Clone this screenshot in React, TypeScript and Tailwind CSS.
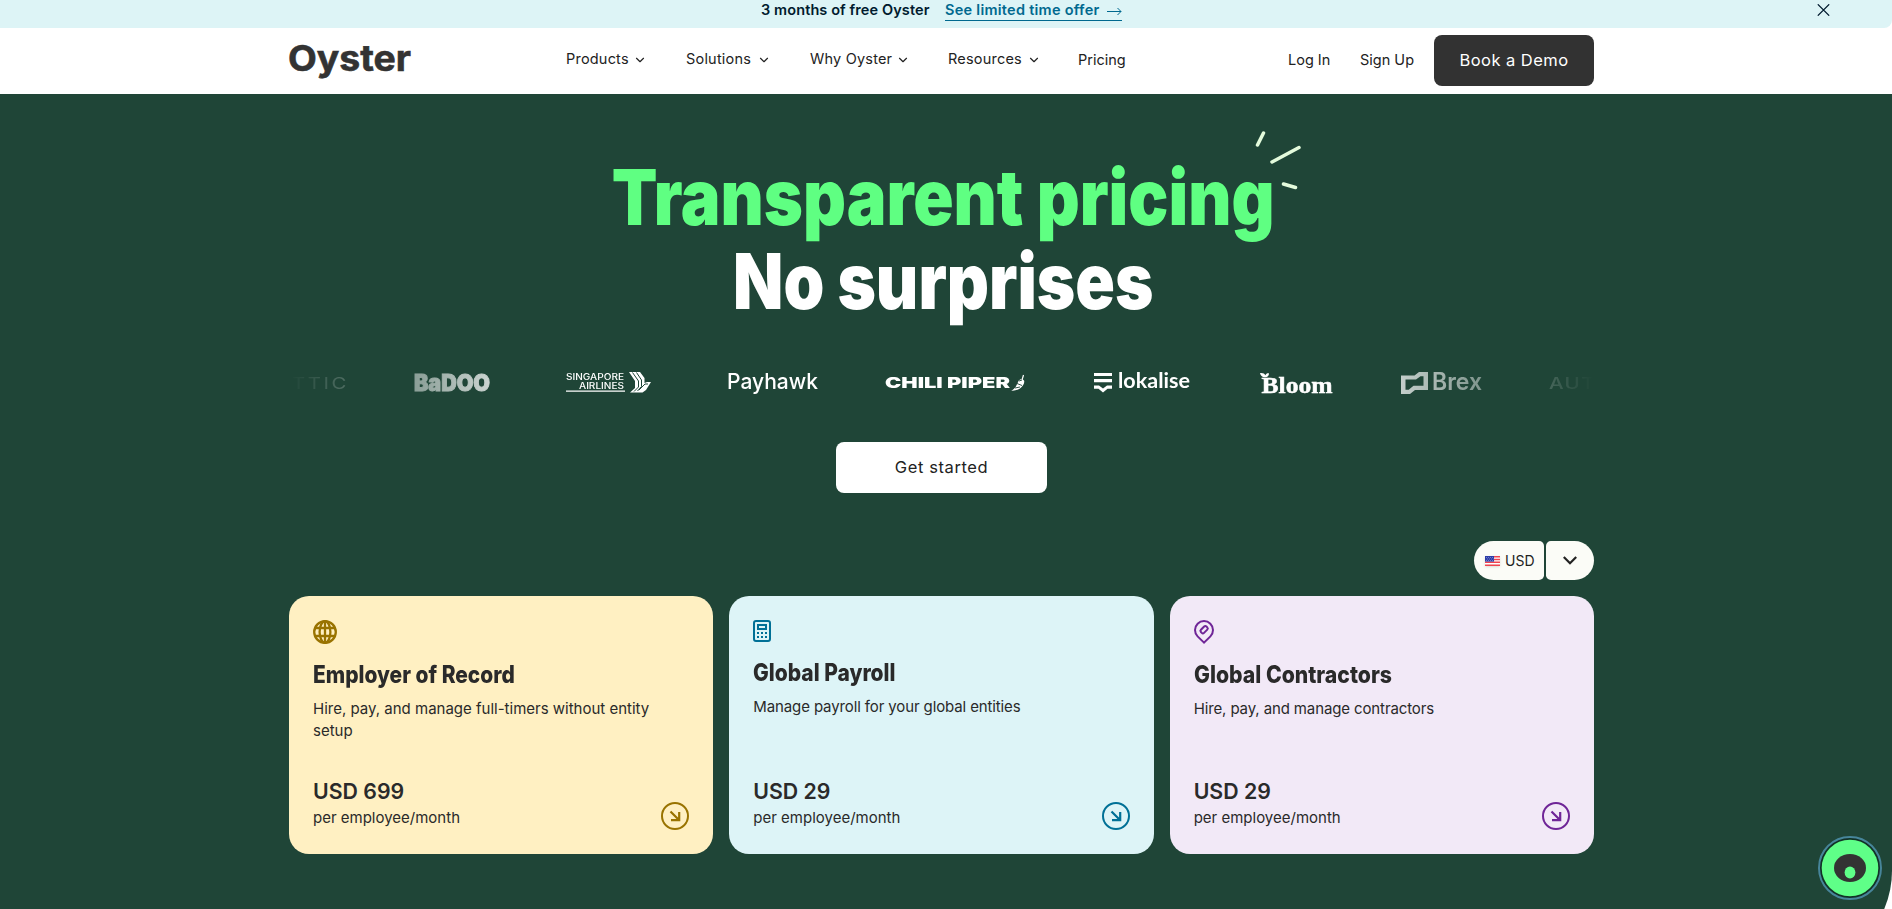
import type { ReactNode } from "react";
import { ChevronDown } from "lucide-react";

type Plan = {
  title: string;
  description: string;
  price: string;
  card: string;
  accent: string;
  titleClass: string;
  descriptionClass: string;
  icon: ReactNode;
};

const NAV = [
  { label: "Products", cell: "w-[120px]", text: "w-[67px]" },
  { label: "Solutions", cell: "w-[124px]", text: "w-[71px]" },
  { label: "Why Oyster", cell: "w-[138px]", text: "w-[86px]" },
  { label: "Resources", cell: "w-[130px]", text: "w-[79px]" },
];

function GlobeIcon() {
  return (
    <svg width="24" height="24" viewBox="0 0 24 24" fill="none" stroke="currentColor" strokeWidth="2.3">
      <circle cx="12" cy="12" r="10.8" />
      <ellipse cx="12" cy="12" rx="5.4" ry="10.8" />
      <path d="M12 1v22M2 8h20M2 16h20" />
    </svg>
  );
}

function CalculatorIcon() {
  return (
    <svg width="18" height="22" viewBox="0 0 18 22" fill="none" stroke="currentColor" strokeWidth="2">
      <rect x="1" y="1" width="16" height="20" rx="2" />
      <path d="M5 5h8v4H5z" />
      <path d="M4 13h2M8 13h2M12 13h2M4 17h2M8 17h2M12 17h2" />
    </svg>
  );
}

function PinIcon() {
  return (
    <svg width="20" height="24" viewBox="0 0 20 24" fill="none" stroke="currentColor" strokeWidth="2">
      <path d="M10 22.6 3.6 16.4a9 9 0 1 1 12.8 0z" />
      <rect x="7.9" y="5.8" width="4.4" height="7.8" rx="1.6" transform="rotate(45 10.1 9.7)" />
    </svg>
  );
}

const PLANS: Plan[] = [
  {
    title: "Employer of Record",
    description: "Hire, pay, and manage full-timers without entity setup",
    price: "USD 699",
    card: "bg-[#fff0c2]",
    accent: "text-[#997300]",
    titleClass: "scale-x-[0.872]",
    descriptionClass: "",
    icon: <GlobeIcon />,
  },
  {
    title: "Global Payroll",
    description: "Manage payroll for your global entities",
    price: "USD 29",
    card: "bg-[#ddf4f7]",
    accent: "text-[#007096]",
    titleClass: "scale-x-[0.874]",
    descriptionClass: "tracking-[-0.12px]",
    icon: <CalculatorIcon />,
  },
  {
    title: "Global Contractors",
    description: "Hire, pay, and manage contractors",
    price: "USD 29",
    card: "bg-[#f2e9f7]",
    accent: "text-[#6f2597]",
    titleClass: "scale-x-[0.883]",
    descriptionClass: "tracking-[-0.12px]",
    icon: <PinIcon />,
  },
];

function Banner() {
  return (
    <div className="flex h-7 rounded-br-lg bg-[#ddf4f6] text-[14.5px] leading-[20px] font-semibold text-[#001b2e]">
      <span className="ml-[761px] w-[184px] tracking-[0.1px] whitespace-nowrap">3 months of free Oyster</span>
      <a href="#" className="flex h-[21px] w-[177px] items-start justify-between border-b border-[#00698f] tracking-[0.27px] whitespace-nowrap text-[#00698f]">
        See limited time offer
        <svg className="mt-[6px]" width="15" height="10" viewBox="0 0 15 10" fill="none" stroke="currentColor">
          <path d="M0 5.5h14M10.5 2 14 5.5 10.5 9" />
        </svg>
      </a>
      <button type="button" aria-label="Close" className="mr-[62px] ml-auto flex h-5 items-center">
        <svg width="13" height="12" viewBox="0 0 13 12" stroke="currentColor" strokeWidth="1.2">
          <path d="M.8.3 12.2 11.7M12.2.3.8 11.7" />
        </svg>
      </button>
    </div>
  );
}

function Header() {
  return (
    <header className="flex h-[66px] items-center bg-white pb-px pl-[289px] text-[14.5px] text-[#222]">
      <svg width="124" height="40" viewBox="0 0 124 40" className="shrink-0 overflow-visible">
        <text x="-1" y="29.5" textLength="123" lengthAdjust="spacingAndGlyphs" fontFamily="Inter, sans-serif" fontSize="36" fontWeight="700" fill="#333" stroke="#333" strokeWidth=".6">
          Oyster
        </text>
      </svg>
      <nav className="ml-[153px] flex items-center pb-0.5">
        {NAV.map((item) => (
          <a key={item.label} href="#" className={`flex items-center pb-px tracking-[0.2px] whitespace-nowrap ${item.cell}`}>
            <span className={item.text}>{item.label}</span>
            <ChevronDown className="mt-px size-3.5 shrink-0" strokeWidth={2} />
          </a>
        ))}
        <a href="#" className="w-[210px] pt-px">Pricing</a>
      </nav>
      <a href="#" className="w-[72px] pb-px">Log In</a>
      <a href="#" className="w-[74px] pb-px">Sign Up</a>
      <a href="#" className="flex h-[51px] w-40 items-center justify-center rounded-lg bg-[#323232] text-[16.5px] tracking-[0.45px] text-white">
        Book a Demo
      </a>
    </header>
  );
}

function Sparks() {
  return (
    <svg className="absolute top-[129px] left-[1253px]" width="52" height="64" viewBox="0 0 52 64" stroke="#e4fbdc" strokeWidth="3.5" strokeLinecap="round">
      <path d="M4.500 16 10.500 4M19 33 46 18.500M30.500 55 42.500 58.500" />
    </svg>
  );
}

function Logos() {
  return (
    <div className="flex h-[30px] w-[1305px] overflow-hidden text-white [mask-image:linear-gradient(to_right,transparent,black_20%,black_80%,transparent)]">
      <svg width="60" height="30" fill="currentColor" className="overflow-visible">
        <text x="-12" y="21" textLength="72" lengthAdjust="spacingAndGlyphs" fontFamily="Inter, sans-serif" fontSize="15.5" fontWeight="400" letterSpacing="2">ATTIC</text>
      </svg>
      <svg className="ml-[65px] overflow-visible" width="76" height="30" fill="currentColor">
        <text x="0" y="23" textLength="76" lengthAdjust="spacingAndGlyphs" fontFamily="Inter, sans-serif" fontSize="22.5" fontWeight="900" stroke="currentColor" strokeWidth=".9">BaDOO</text>
      </svg>
      <svg className="ml-[76px] overflow-visible" width="86" height="30" fill="currentColor">
        <text x="0" y="12" textLength="58" lengthAdjust="spacingAndGlyphs" fontFamily="Inter, sans-serif" fontSize="8.5" fontWeight="500">SINGAPORE</text>
        <text x="13" y="20.5" textLength="45" lengthAdjust="spacingAndGlyphs" fontFamily="Inter, sans-serif" fontSize="8.5" fontWeight="500">AIRLINES</text>
        <path d="M0 22.500h59v1.300H0z" />
        <path d="M63 4h11l4.500 6v5l2.500-1h4l-5 8-3.500 2.500H64l5-4.500V13z" />
        <path d="M66.500 4.500l6 8.500v6l-4.500 4.500M70.500 4.500l5 7.500v6.500l-4 4.500M73 22l6-6h3" stroke="#1f4537" strokeWidth="1" fill="none" />
      </svg>
      <svg className="ml-[76px] overflow-visible" width="91" height="30" fill="currentColor">
        <text x="-1" y="20.5" textLength="91" lengthAdjust="spacingAndGlyphs" fontFamily="Inter, sans-serif" fontSize="22" fontWeight="500">Payhawk</text>
      </svg>
      <svg className="ml-[67px] overflow-visible" width="140" height="30" fill="currentColor">
        <text x="-1" y="20" textLength="125" lengthAdjust="spacingAndGlyphs" fontFamily="Inter, sans-serif" fontSize="15" fontWeight="900">CHILI PIPER</text>
        <path d="M125 22.500c5-1.500 5.500-6 7.500-9.500 1-1.700 4-2.500 5.500-.5 1 2-1 6-4 8-2.500 1.700-6 2.500-9 2z" />
        <path d="M136 12l1.500-5" stroke="#fff" strokeWidth="1.2" />
        <path d="M129 20l5-1M131 15.500l5 2M133 13l3-1" stroke="#1f4537" strokeWidth=".9" />
      </svg>
      <svg className="ml-[68px] overflow-visible" width="97" height="30" fill="currentColor">
        <path d="M0 5h18v3H0zM0 11h18v3.200H0zM0 17.500h5l4 3 4-3h5v3.300h-4.500L9 24.500l-4.500-3.700H0z" />
        <text x="24" y="20" textLength="72" lengthAdjust="spacingAndGlyphs" fontFamily="Lato, sans-serif" fontSize="21.5" fontWeight="700">lokalise</text>
      </svg>
      <svg className="ml-[69px] overflow-visible" width="73" height="30" fill="currentColor">
        <path d="M0 5c3-.3 4.500.5 5.300 2.300C6 5.500 7.200 5 9 5.200 9 8 7.500 9.300 5 9.300 2 9.300.5 7.500 0 5z" />
        <text x="1.500" y="24.500" textLength="71" lengthAdjust="spacingAndGlyphs" fontFamily="Liberation Serif, serif" fontSize="24" fontWeight="700" stroke="currentColor" strokeWidth=".5">Bloom</text>
      </svg>
      <svg className="ml-[68px] overflow-visible" width="81" height="30" fill="currentColor">
        <path fillRule="evenodd" d="M0 7.500h13.500L18 4h9v18H14l-5 4H0zM4.500 11.500v10.200h3.200l4.800-4h10V8.300h-3l-4.500 3.200z" />
        <text x="31" y="21.500" textLength="50" lengthAdjust="spacingAndGlyphs" fontFamily="Inter, sans-serif" fontSize="24" fontWeight="600">Brex</text>
      </svg>
      <svg className="ml-[67px] overflow-visible" width="45" height="30" fill="currentColor">
        <text x="0" y="21" textLength="47" lengthAdjust="spacingAndGlyphs" fontFamily="Inter, sans-serif" fontSize="15.5" fontWeight="500" letterSpacing="1">AUT</text>
      </svg>
    </div>
  );
}

function UsFlag() {
  return (
    <svg width="15" height="10" viewBox="0 0 15 10" className="shadow-sm">
      <path fill="#fff" d="M0 0h15v10H0z" />
      <path fill="#f0434f" d="M0 0h15v1.400H0zM0 2.800h15v1.400H0zM0 5.600h15V7H0zM0 8.500h15v1.400H0z" />
      <path fill="#2c3da8" d="M0 0h9v5.600H0z" />
      <path stroke="#b9c0ee" strokeWidth=".7" strokeDasharray=".7 1.3" d="M1 1.500h7.500M2 3h6.500M1 4.500h7.500" />
    </svg>
  );
}

function CurrencyPicker() {
  return (
    <div className="flex h-[39px] gap-0.5 text-[#222]">
      <div className="flex w-[70px] items-center gap-[5px] rounded-l-[20px] rounded-r-[5px] bg-[#fbfcf7] pl-[11px] text-[14px]">
        <UsFlag />
        USD
      </div>
      <button type="button" aria-label="Change currency" className="flex w-12 items-center justify-center rounded-l-[5px] rounded-r-[20px] bg-[#fbfcf7]">
        <svg width="14" height="9" viewBox="0 0 14 9" fill="none" stroke="currentColor" strokeWidth="2.2">
          <path d="M.8 1 7 7.2 13.2 1" />
        </svg>
      </button>
    </div>
  );
}

function PlanCard({ plan }: { plan: Plan }) {
  return (
    <article className={`flex h-[258px] flex-1 flex-col rounded-[20px] px-6 pt-6 pb-[25px] text-[#2a2a2a] ${plan.card}`}>
      <div className={plan.accent}>{plan.icon}</div>
      <h2 className={`mt-4 w-max origin-left text-[24px] leading-[30px] font-extrabold ${plan.titleClass}`}>{plan.title}</h2>
      <p className={`mt-2 text-[15px] leading-[22px] ${plan.descriptionClass}`}>{plan.description}</p>
      <div className="mt-auto flex items-end justify-between">
        <div>
          <p className="text-[21.3px] leading-[32px] font-semibold">{plan.price}</p>
          <p className="text-[15px] leading-[22px]">per employee/month</p>
        </div>
        <svg className={`-mb-px ${plan.accent}`} width="28" height="28" viewBox="0 0 28 28" fill="none" stroke="currentColor" strokeWidth="2">
          <circle cx="14" cy="14" r="13" />
          <path d="M9.500 9.500 18 18M18.200 10v8.200H10" strokeWidth="2.2" />
        </svg>
      </div>
    </article>
  );
}

function ChatLauncher() {
  return (
    <button type="button" aria-label="Open chat" className="absolute top-[836px] left-[1818px]">
      <svg width="64" height="64" viewBox="0 0 64 64">
        <circle cx="32" cy="32" r="31" fill="#123227" stroke="#47859a" strokeWidth="2" />
        <circle cx="32" cy="32" r="28.300" fill="#5fff88" />
        <ellipse cx="32" cy="32" rx="16" ry="14" fill="#333" />
        <ellipse cx="32" cy="36.500" rx="5.400" ry="6" fill="#5fff88" />
      </svg>
    </button>
  );
}

export default function App() {
  return (
    <div className="relative h-[909px] w-[1892px] overflow-hidden bg-white font-['Inter',sans-serif]">
      <Banner />
      <Header />
      <main className="h-[873px] rounded-br-[96px] bg-[#1f4537] pt-[61px] pl-[289px]">
        <div className="flex w-[1305px] flex-col items-center">
          <h1 className="flex flex-col items-center pl-[3px] text-[77px] leading-[84px] font-black whitespace-nowrap text-white">
            <span className="scale-x-[0.865] text-[#5fff82]">Transparent pricing</span>
            <span className="scale-x-[0.85]">No surprises</span>
          </h1>
          <div className="mt-[45px]">
            <Logos />
          </div>
          <a href="#" className="mt-11 flex h-[51px] w-[211px] items-center justify-center rounded-lg bg-white text-[16.5px] tracking-[0.6px] text-[#222]">
            Get started
          </a>
          <div className="mt-12 self-end">
            <CurrencyPicker />
          </div>
          <section className="mt-4 flex w-full gap-4">
            {PLANS.map((plan) => (
              <PlanCard key={plan.title} plan={plan} />
            ))}
          </section>
        </div>
      </main>
      <Sparks />
      <ChatLauncher />
    </div>
  );
}
